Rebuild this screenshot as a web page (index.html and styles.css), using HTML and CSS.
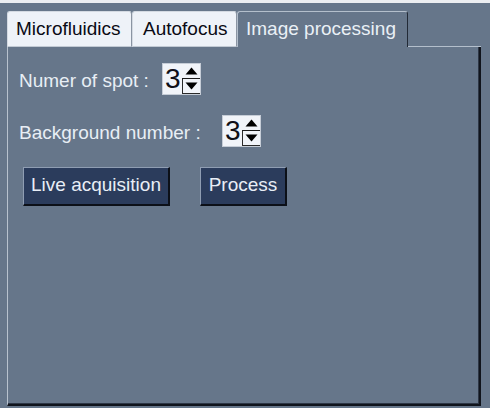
FILE: index.html
```html
<!DOCTYPE html>
<html>
<head>
<meta charset="utf-8">
<link rel="stylesheet" href="styles.css">
</head>
<body>
<div class="topstrip"></div>
<div class="widget">
  <div class="tabbar">
    <div class="tab t1">Microfluidics</div>
    <div class="tab t2">Autofocus</div>
    <div class="tab sel">Image processing</div>
    <div class="tabfill"></div>
  </div>
  <div class="panel">
    <div class="row">
      <span class="label l1">Numer of spot :</span>
      <div class="spin">
        <span class="val">3</span>
        <div class="arrows">
          <div class="up"><svg width="13" height="8" viewBox="0 0 13 8"><polygon points="6.5,0.5 12.5,7.5 0.5,7.5" fill="#000"/></svg></div>
          <div class="dn"><svg width="13" height="8" viewBox="0 0 13 8"><polygon points="0.5,0.5 12.5,0.5 6.5,7.5" fill="#000"/></svg></div>
        </div>
      </div>
    </div>
    <div class="row">
      <span class="label l2">Background number :</span>
      <div class="spin">
        <span class="val">3</span>
        <div class="arrows">
          <div class="up"><svg width="13" height="8" viewBox="0 0 13 8"><polygon points="6.5,0.5 12.5,7.5 0.5,7.5" fill="#000"/></svg></div>
          <div class="dn"><svg width="13" height="8" viewBox="0 0 13 8"><polygon points="0.5,0.5 12.5,0.5 6.5,7.5" fill="#000"/></svg></div>
        </div>
      </div>
    </div>
    <div class="buttons">
      <button class="btn b1">Live acquisition</button>
      <button class="btn b2">Process</button>
    </div>
  </div>
</div>
</body>
</html>
```

FILE: styles.css
```css
html, body {
  margin: 0;
  padding: 0;
  background: #66768a;
  width: 490px;
  height: 408px;
  overflow: hidden;
  font-family: "Liberation Sans", Arial, sans-serif;
}
.topstrip {
  height: 3px;
  background: #eceef1;
}
.widget {
  padding: 8px 0 0 7px;
  width: 474px;
}
.tabbar {
  display: flex;
  height: 36px;
}
.tab {
  box-sizing: border-box;
  height: 36px;
  display: flex;
  align-items: center;
  font-size: 19px;
  line-height: 22px;
  border-top: 1px solid #d4dae2;
  border-left: 1px solid #d4dae2;
  border-right: 1px solid #8a94a2;
  border-bottom: 1px solid #c2cad4;
  border-radius: 3px 3px 0 0;
  background: #eef2f8;
  color: #0a0a14;
  white-space: nowrap;
}
.t1 { width: 125px; padding-left: 8px; }
.t2 { width: 105px; padding-left: 10px; }
.tab.sel {
  width: 171px;
  padding-left: 8px;
  background: #66768a;
  color: #eaf0f6;
  border-top: 1px solid #b4bfcc;
  border-left: 1px solid #b4bfcc;
  border-right: 1px solid #222a36;
  border-bottom: none;
  padding-bottom: 1px;
}
.tabfill {
  flex: 1;
  border-bottom: 1px solid #b4bfcc;
}
.panel {
  box-sizing: border-box;
  height: 359px;
  border-left: 1px solid #b8c2ce;
  border-right: 2px solid #10141c;
  border-bottom: 2px solid #10141c;
  box-shadow: inset -1px -1px 0 #2e3746;
  padding: 16px 0 0 11px;
  display: flex;
  flex-direction: column;
  gap: 20px;
}
.row {
  display: flex;
  align-items: center;
  height: 32px;
}
.label {
  font-size: 19px;
  line-height: 22px;
  color: #e8eef5;
  padding-top: 3px;
  white-space: nowrap;
}
.l1 { width: 143px; }
.l2 { width: 203px; }
.spin {
  box-sizing: border-box;
  display: flex;
  width: 39px;
  height: 32px;
  border: 1px solid #c6cdd7;
  background: #f1f4f9;
}
.val {
  width: 17px;
  padding-left: 2px;
  font-size: 28px;
  line-height: 30px;
  color: #101018;
}
.arrows {
  flex: 1;
  display: flex;
  flex-direction: column;
}
.up, .dn {
  flex: 1;
  display: flex;
  align-items: center;
  justify-content: center;
}
.up {
  border-bottom: 1px solid #1a1a1a;
}
.dn {
  border-left: 1px solid #2a2a2a;
  border-bottom: 1px solid #2a2a2a;
}
.buttons {
  display: flex;
  gap: 30px;
  padding-left: 4px;
}
.btn {
  box-sizing: border-box;
  height: 39px;
  margin: 0;
  padding: 0 0 2px 0;
  font-family: "Liberation Sans", Arial, sans-serif;
  font-size: 19px;
  color: #e8eef6;
  background: #2b3c5c;
  border-top: 1px solid #8f9db2;
  border-left: 1px solid #8f9db2;
  border-right: 2px solid #0c1018;
  border-bottom: 2px solid #0c1018;
}
.b1 { width: 147px; }
.b2 { width: 87px; }
```
